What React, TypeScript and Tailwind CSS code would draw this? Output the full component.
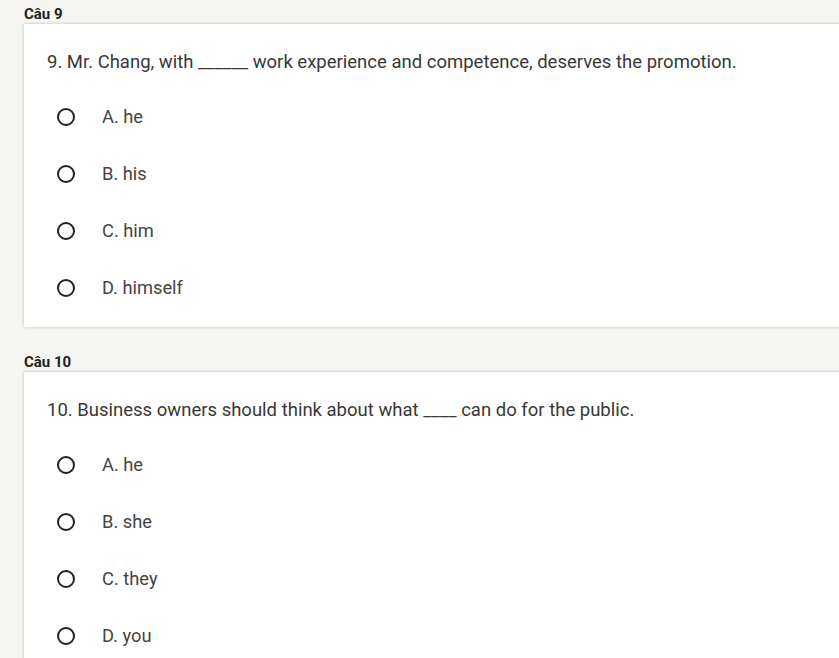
import React from 'react';

type Question = {
  label: string;
  text: string;
  options: string[];
};

const questions: Question[] = [
  {
    label: 'Câu 9',
    text: '9. Mr. Chang, with ______ work experience and competence, deserves the promotion.',
    options: ['A. he', 'B. his', 'C. him', 'D. himself'],
  },
  {
    label: 'Câu 10',
    text: '10. Business owners should think about what ____ can do for the public.',
    options: ['A. he', 'B. she', 'C. they', 'D. you'],
  },
];

function QuestionCard({ q, first }: { q: Question; first: boolean }) {
  return (
    <section className={first ? 'pt-[4px]' : 'mt-[25px]'}>
      <div className="h-[20px] leading-[20px] text-[15px] font-bold text-[#222]">{q.label}</div>
      <div className="bg-white shadow-[0_0_3px_rgba(0,0,0,0.25)] px-[23px] pt-[25px] pb-[11px] w-[900px]">
        <p className="text-[18.5px] leading-[26px] text-[#383838]">{q.text}</p>
        <ul className="mt-[13px]">
          {q.options.map((opt) => (
            <li key={opt} className="h-[57px] flex items-center pl-[10px]">
              <span className="w-[18px] h-[18px] rounded-full border-2 border-[#222] shrink-0" />
              <span className="ml-[27px] text-[18.3px] text-[#444]">{opt}</span>
            </li>
          ))}
        </ul>
      </div>
    </section>
  );
}

export default function App() {
  return (
    <div
      className="w-[839px] h-[658px] overflow-hidden bg-[#f5f5f2] pl-[24px]"
      style={{ fontFamily: 'Roboto, "Liberation Sans", sans-serif' }}
    >
      {questions.map((q, i) => (
        <QuestionCard key={q.label} q={q} first={i === 0} />
      ))}
    </div>
  );
}
